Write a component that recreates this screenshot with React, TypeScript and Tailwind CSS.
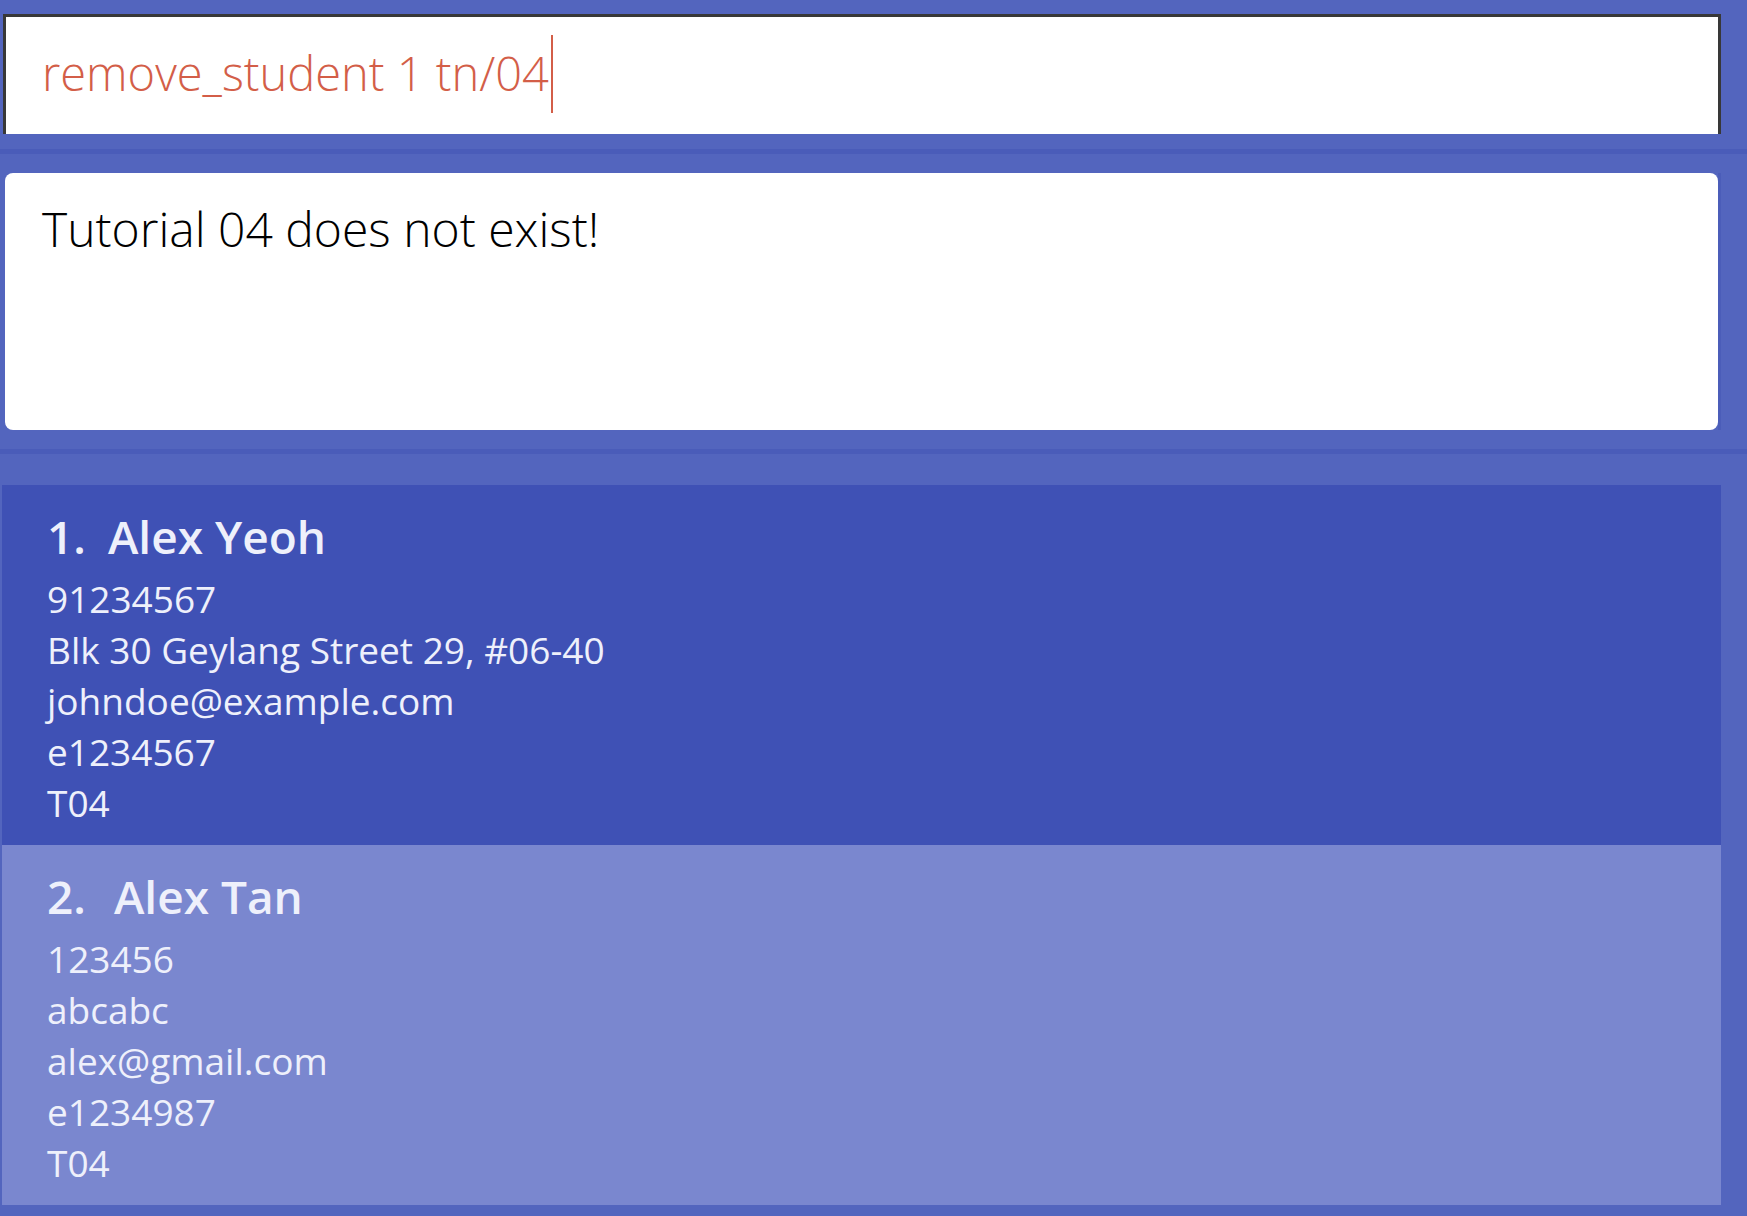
import React from "react";

type Person = {
  name: string;
  phone: string;
  address: string;
  email: string;
  id: string;
  tut: string;
};

const people: Person[] = [
  {
    name: "Alex Yeoh",
    phone: "91234567",
    address: "Blk 30 Geylang Street 29, #06-40",
    email: "johndoe@example.com",
    id: "e1234567",
    tut: "T04",
  },
  {
    name: "Alex Tan",
    phone: "123456",
    address: "abcabc",
    email: "alex@gmail.com",
    id: "e1234987",
    tut: "T04",
  },
];

function Card({ p, i }: { p: Person; i: number }) {
  const bg = i === 0 ? "bg-[#3f51b5]" : "bg-[#7a87cf]";
  const gap = i === 0 ? "ml-[22px]" : "ml-[28px]";
  return (
    <div className={`${bg} h-[360px] pl-[45px] pt-[21px] text-[#eef0fb]`}>
      <div className="flex items-baseline text-[46px] leading-[60px] font-semibold">
        <span>{i + 1}.</span>
        <span className={gap}>{p.name}</span>
      </div>
      <div className="mt-[7px] text-[37px] leading-[51px] font-normal">
        <div>{p.phone}</div>
        <div>{p.address}</div>
        <div>{p.email}</div>
        <div>{p.id}</div>
        <div>{p.tut}</div>
      </div>
    </div>
  );
}

export default function App() {
  return (
    <div
      className="w-[1747px] h-[1216px] bg-[#5365be] overflow-hidden flex flex-col"
      style={{ fontFamily: '"Open Sans", "Noto Sans", sans-serif' }}
    >
      {/* command box */}
      <div className="mt-[14px] ml-[3px] w-[1718px] h-[120px] bg-white border-t-[3px] border-x-[3px] border-[#383838] flex items-center pl-[36px] pb-[4px]">
        <span className="text-[47px] font-light text-[#d35e48] leading-none">
          remove_student 1 tn/04
        </span>
        <span className="ml-[2px] inline-block w-[2px] h-[78px] bg-[#d35e48]" />
      </div>

      <div className="h-[15px]" />
      <div className="h-[5px] bg-[#4a5cb9]" />
      <div className="h-[19px]" />

      {/* result box */}
      <div className="flex">
        <div className="w-[5px]" />
        <div className="w-[1713px] h-[257px] bg-white rounded-[8px] pl-[37px] pt-[24px]">
          <div className="text-[48px] font-light text-black leading-[63px]">
            Tutorial 04 does not exist!
          </div>
        </div>
        <div className="w-[3px] bg-[#4b5db9]" />
      </div>

      <div className="h-[19px]" />
      <div className="h-[5px] bg-[#4a5cb9]" />
      <div className="h-[31px]" />

      {/* list */}
      <div className="ml-[2px] w-[1719px] flex flex-col">
        {people.map((p, i) => (
          <Card key={i} p={p} i={i} />
        ))}
      </div>
    </div>
  );
}
